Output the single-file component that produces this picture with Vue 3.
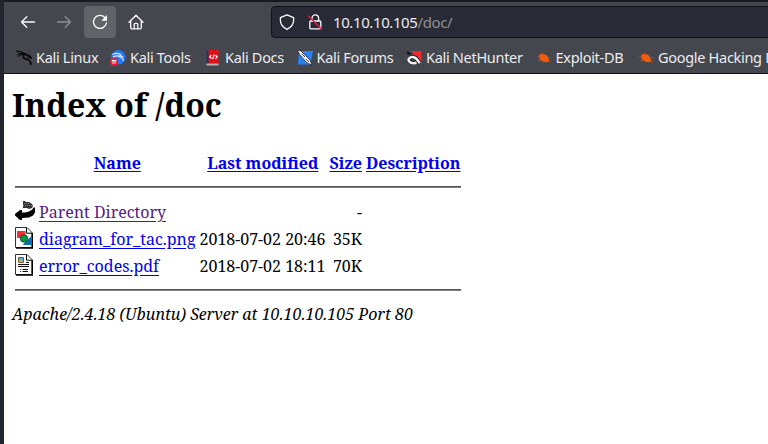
<script setup>
const bookmarks = [
  { icon: 'dragon', label: 'Kali Linux', width: 63 },
  { icon: 'tools', label: 'Kali Tools', width: 64 },
  { icon: 'docs', label: 'Kali Docs', width: 60.5 },
  { icon: 'forums', label: 'Kali Forums', width: 78.5 },
  { icon: 'nethunter', label: 'Kali NetHunter', width: 98.5 },
  { icon: 'bug', label: 'Exploit-DB', width: 71.5 },
  { icon: 'bug', label: 'Google Hacking DB', width: 130 }
]
const files = [
  { icon: 'back', name: 'Parent Directory', visited: true, date: '', size: '-' },
  { icon: 'image', name: 'diagram_for_tac.png', date: '2018-07-02 20:46', size: '35K' },
  { icon: 'layout', name: 'error_codes.pdf', date: '2018-07-02 18:11', size: '70K' }
]
</script>

<template>
  <div class="window">
    <header class="chrome">
      <nav class="toolbar">
        <span class="tool">
          <svg width="16" height="16" viewBox="0 0 16 16" class="line"><path d="M14.500 8H1.500M6.800 2.700 1.500 8l5.300 5.300" /></svg>
        </span>
        <span class="tool dim">
          <svg width="16" height="16" viewBox="0 0 16 16" class="line"><path d="M1.500 8h13M9.200 2.700 14.500 8l-5.300 5.300" /></svg>
        </span>
        <span class="tool active">
          <svg width="16" height="16" viewBox="0 0 16 16" class="line"><path d="M12.800 3.500A6.500 6.500 0 1 0 14.400 9" /><path d="M15 1v5.700H9.300z" fill="#fbfbfe" stroke="none" /></svg>
        </span>
        <span class="tool">
          <svg width="16" height="16" viewBox="0 0 16 16" class="line"><path d="M1 8.200 8 1.200l7 7M2.700 7v6.800q0 1 1 1h8.600q1 0 1-1V7M6.200 14.600v-4q0-1.200 1.200-1.200h1.200q1.200 0 1.200 1.200v4" /></svg>
        </span>
        <div class="urlbar">
          <svg width="16" height="16" viewBox="0 0 16 16" class="line"><path d="M8 .8 14.600 3.700V6.500c0 4-2.600 6.800-6.600 8.800C4 13.300 1.400 10.500 1.400 6.500V3.700z" /></svg>
          <svg class="lock line" width="16" height="16" viewBox="0 0 16 16"><path d="M5 7V4.200a3.300 3.300 0 0 1 6.600 0V7M3.800 7h9q1 0 1 1v5.800q0 1-1 1h-9q-1 0-1-1V8q0-1 1-1z" /><path d="M1.500 2 14.500 15" class="slash" /></svg>
          <span class="url">10.10.10.105<span class="path">/doc/</span></span>
        </div>
      </nav>
      <nav class="bookmarks">
        <a v-for="b in bookmarks" :key="b.label" class="bookmark">
          <svg width="16" height="16" viewBox="0 0 16 16">
            <g v-if="b.icon === 'dragon'" fill="none" stroke="#08090b">
              <path d="M0 1.200 5 1.800l4 1.700 2 2M1 4.500l4-1.200 4 .7M2 6.500l3.500-2 3 .2" stroke-width="1.200" />
              <path d="M8.500 4.500c-2 2-1.500 3.800 1 4.400 3 .7 5 1.400 5.500 6M9 4l4 1.800 2 2-3.500-1" stroke-width="1.700" />
            </g>
            <g v-else-if="b.icon === 'tools'">
              <circle cx="8.300" cy="7.300" r="7.200" fill="#2577f5" />
              <path d="M2.500 4.500c4-2 7-1 9 1M3 7c4-2 6-1 7 0 2 .5 3 1.500 3.500 4M9.500 5.500l4 1.500" fill="none" stroke="#d9e8ff" stroke-width="1.100" />
              <circle cx="4" cy="12" r="4" fill="#ed1c2e" />
              <path d="M1.700 10.500h4.600M3 10.500v3.300M5.100 10.500v3.300" stroke="#fff" fill="none" />
            </g>
            <g v-else-if="b.icon === 'docs'">
              <path d="M1.500.5h3v13h-3z" fill="#203567" /><path d="M3.500 0h10v13.500h-10z" fill="#df1018" />
              <path d="M1.500 13.500h12v2h-12z" fill="#b9b0b0" />
              <path d="M6.300 5 4.700 7l2 1.500M10.500 5.200l1.700 1.500L10.500 9M9.200 4.500 7.800 9.200" stroke="#fff" fill="none" stroke-width="1.200" />
            </g>
            <g v-else-if="b.icon === 'forums'">
              <path d="M2 1h14l-2.500 13.500H1z" fill="#2681f7" />
              <path d="m0 0 4 1 9 9 2 5-5-2-7-8z" fill="#eee" stroke="#161920" stroke-width=".7" />
              <path d="m5 4 3 3M9 9l3 3" stroke="#34373e" stroke-width=".9" />
            </g>
            <g v-else-if="b.icon === 'nethunter'">
              <path d="M5 1h10.500v13z" fill="#ef272f" /><path d="m0 1 3 1 3 2-4 1z" fill="#15171c" />
              <path d="M10 12.500C5 14 2 11 3.500 8.500 5.500 6 9 6.500 11 9.500l3 4" fill="none" stroke="#16171c" stroke-width="4" />
              <path d="M10.500 12.700C5 14.500 1.500 11 3 8.500 5 6 9 6.500 11 9.500l2.800 3.700" fill="none" stroke="#f5f5f5" stroke-width="2.500" />
            </g>
            <g v-else fill="#ef5c10" stroke="#ef5c10">
              <path d="M3 5.500c3-2.500 7-1.500 9 1.500l1.500 4c-3 2.500-7.500.5-9.500-2z" stroke="none" />
              <path d="M3 3.500 6 6M1 6.500l4 1M2 11.500l4-2M6 2.500l2 4M12.500 7.500 15.500 8M12 10l3 3M3 9l3 1M7 12.500l2-2" fill="none" stroke-width=".5" />
            </g>
          </svg>
          <span class="label" :style="{ width: b.width + 'px' }">{{ b.label }}</span>
        </a>
      </nav>
    </header>

    <main class="page">
      <h1>Index of /doc</h1>
      <section class="listing">
        <div class="row head">
          <span></span>
          <a class="center">Name</a>
          <a class="center">Last modified</a>
          <a class="right">Size</a>
          <a class="desc">Description</a>
        </div>
        <div class="rule"></div>
        <div v-for="f in files" :key="f.name" class="row file">
          <svg class="icon" width="20" height="22" viewBox="0 0 20 22">
            <g v-if="f.icon === 'back'">
              <path d="M8 1h2l1 1h3l3 2 1 2-1 2-3 1-2-1H8z" fill="#333" />
              <path d="M9 3.500h6M8 5.500h9" stroke="#999" stroke-width=".7" stroke-dasharray="1 1" />
              <path d="M8 12.500c5 0 9-1.500 10.500-5H20v5l-2 3-4 2-7 .5V20H5L0 15.500V14l5-4h2v2.500z" />
            </g>
            <g v-else>
              <path d="M.5.500H12l5 5V20.500H.5z" fill="#fff" stroke="#333" />
              <path d="M17.300 6v15H1" fill="none" stroke="#000" stroke-width="1.400" />
              <path d="M11.500 1v5.200H17" fill="none" stroke="#000" />
              <g v-if="f.icon === 'image'">
                <path d="M2 4h8.500v7H2z" fill="#f42f35" /><path d="M16 9.500V18H7.500z" fill="#086daa" />
                <circle cx="9" cy="11.500" r="3.700" fill="#079b48" stroke="#043b21" stroke-width=".8" />
              </g>
              <g v-else>
                <path d="M3.500 3.500h5v5h-5z" fill="#59aee8" stroke="#805b28" /><path d="M4 6.500h4V8H4z" fill="#e5b258" />
                <path d="M11 8.500h3M3 10.500h11M3 12.500h11M7.500 15.500H13M7.500 17.500H13" stroke="#111" />
                <path d="M5 15.500h1M5 17.500h1" stroke="#f00" />
              </g>
            </g>
          </svg>
          <span><a class="link" :class="{ visited: f.visited }">{{ f.name }}</a></span>
          <span class="date">{{ f.date }}</span>
          <span class="right">{{ f.size }}</span>
          <span></span>
        </div>
        <div class="rule end"></div>
      </section>
      <address>Apache/2.4.18 (Ubuntu) Server at 10.10.10.105 Port 80</address>
    </main>
  </div>
</template>

<style>
body { overflow: hidden; background: #fff; }
</style>
<style scoped>
* { box-sizing: border-box; }
.window { width: 768px; height: 444px; overflow: hidden; border-left: 4px solid #23252e; display: flex; flex-direction: column; }
.chrome { height: 74px; flex: none; background: #45474e; border-top: 2px solid #191a20; border-bottom: 1px solid #111218; font-family: "Noto Sans", sans-serif; color: #ececee; overflow: hidden; }
.toolbar { height: 40px; padding: 4px 0 4px 8px; display: flex; gap: 4px; }
.tool { width: 32px; height: 32px; flex: none; border-radius: 4px; display: flex; align-items: center; justify-content: center; }
.tool.active { background: #626369; }
.dim { opacity: .4; }
.line { fill: none; stroke: #fbfbfe; stroke-width: 1.300; stroke-linecap: round; stroke-linejoin: round; flex: none; }
.slash { stroke: #e61b50; stroke-width: 1.400; }
.urlbar { flex: 0 0 520px; margin-left: 115px; height: 32px; border: 1px solid #111218; border-radius: 4px; background: #282a36; display: flex; align-items: center; padding-left: 7px; }
.lock { margin-left: 12px; }
.url { margin-left: 10px; font-size: 15px; letter-spacing: -.4px; white-space: nowrap; }
.path { color: #8e8f98; }
.bookmarks { height: 32px; padding-left: 12px; display: flex; align-items: center; gap: 11px; }
.bookmark { display: flex; align-items: center; gap: 4px; flex: none; }
.label { font-size: 14.500px; line-height: 20px; letter-spacing: -.3px; margin-top: -2px; white-space: nowrap; }
.page { flex: 1; background: #fff; color: #000; padding: 8px; font: 16px/22px "Noto Serif", "Droid Serif", "DejaVu Serif Condensed", serif; }
h1 { margin: 0; font-size: 32px; line-height: 46px; white-space: nowrap; }
.listing { width: 446px; margin: 21px 0 0 3px; }
.row { display: grid; grid-template-columns: 20px 156.500px 126.500px 32px 95px; column-gap: 4px; align-items: center; white-space: nowrap; }
.head { height: 28px; font-weight: 700; }
.head a { color: #0000ee; text-decoration: underline; text-underline-offset: 2px; }
.center { justify-self: center; }
.right { justify-self: end; }
.file { height: 27px; }
.icon { align-self: start; margin-top: 2px; }
.rule { height: 2px; background: linear-gradient(#555 50%, #808080 50%); margin: 9px 0 10px; }
.rule.end { margin: 10px 0 0; }
.link { color: #0000ee; text-decoration: underline; text-underline-offset: 3px; }
.link.visited { color: #551a8b; }
address { margin-top: 12px; font-style: italic; white-space: nowrap; }
</style>
